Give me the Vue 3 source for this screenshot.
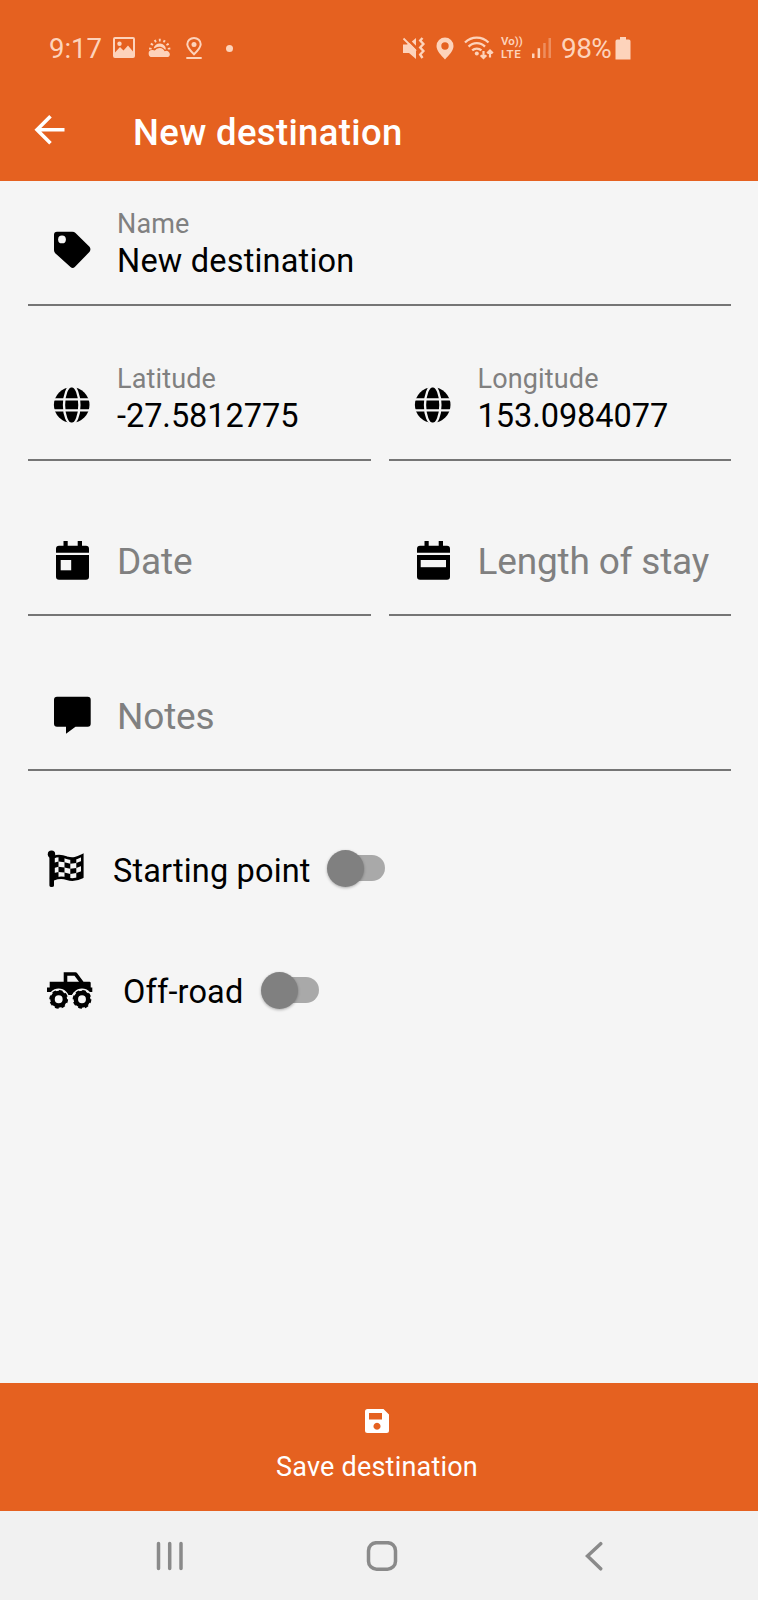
<script setup>
import { ref } from 'vue'

const rows = ref([
  [{ icon: 'tag', label: 'Name', value: 'New destination' }],
  [
    { icon: 'globe', label: 'Latitude', value: '-27.5812775' },
    { icon: 'globe', label: 'Longitude', value: '153.0984077' }
  ],
  [
    { icon: 'date', label: 'Date', value: '' },
    { icon: 'stay', label: 'Length of stay', value: '' }
  ],
  [{ icon: 'notes', label: 'Notes', value: '' }]
])

const startingPoint = ref(false)
const offRoad = ref(false)
</script>

<template>
  <div class="screen">
    <header class="header">
      <div class="status">
        <span class="time">9:17</span>
        <svg class="s-image" width="24" height="22" viewBox="0 0 24 22">
          <path fill-rule="evenodd" d="M3 0H21Q23 0 23 2V19Q23 21 21 21H3Q1 21 1 19V2Q1 0 3 0ZM3 2V15.5L8 10L11.5 13.5L16 8.5L21 14.5V2Z" />
          <circle cx="7.5" cy="6.7" r="2.2" />
        </svg>
        <svg class="s-weather" width="24" height="22" viewBox="0 0 24 22">
          <path d="M4.300 20a3.500 3.500 0 0 1-.3-7 3.500 3.500 0 0 1 2.800.6 5.500 5.500 0 0 1 9.800.7 3 3 0 0 1 3.500 5.700Z" />
          <path d="M5.600 11.600a6.200 6.200 0 0 1 12.300.8l-1 .2a7 7 0 0 0-9.600-1.700Z" />
          <path class="line" stroke-width="2.600" stroke-dasharray="1.900 2.700" d="M2.300 12.500a9.400 9.400 0 0 1 18.800 0" />
        </svg>
        <svg class="s-place" width="18" height="23" viewBox="0 0 18 23">
          <path class="line" stroke-width="2" d="M9 17.300C4.500 13 2.300 10 2.300 7.300a6.700 6.300 0 0 1 13.400 0C15.700 10 13.500 13 9 17.300Z" />
          <circle cx="9" cy="7.500" r="2.500" />
          <path d="M1.300 20h15.400v2H1.300z" />
        </svg>
        <span class="dot"></span>
        <svg class="s-mute" width="24" height="24" viewBox="0 0 24 24">
          <path d="M1 8.500H5L7.500 7 14 13.500V23L7 17H1Z" />
          <path d="M9.800 5.600 14 2V9.800Z" />
          <path class="line" stroke-width="1.800" d="M1.500 2.500 14 15" />
          <path class="line" stroke-width="2.400" d="M20.500 2l-2.300 2.500 3.200 3.500-3.200 3.500 3.200 3.500-3.200 3.500 2.300 3.500" />
        </svg>
        <svg class="s-pin" width="18" height="24" viewBox="0 0 18 24">
          <path fill-rule="evenodd" d="M9 1.500a8.500 8.500 0 0 1 8.500 8.500C17.500 15 13 19 9 23.500 5 19 .5 15 .5 10A8.500 8.500 0 0 1 9 1.500Zm0 4.800a3.700 3.700 0 1 0 0 7.400 3.700 3.700 0 0 0 0-7.400Z" />
        </svg>
        <svg class="s-wifi" width="30" height="24" viewBox="0 0 30 24">
          <path class="line" stroke-width="2.300" d="M1 6.500a16.500 16.500 0 0 1 23.500 0M4.600 10.600a11.300 11.300 0 0 1 16.400 0M8.200 14.400a6.700 6.700 0 0 1 9.200 0" />
          <circle cx="12.800" cy="17.600" r="2" />
          <path class="line" stroke-width="2.200" d="M19.500 15v7M16.700 19.200l2.800 2.800 2.800-2.800M26 21.500v-7M23.200 17.300l2.800-2.800 2.800 2.800" />
        </svg>
        <span class="volte"><b class="vo">Vo))</b><b class="lte">LTE</b></span>
        <svg class="s-signal" width="20" height="22" viewBox="0 0 20 22">
          <path d="M0 16.500h2.500V21H0zM5.600 11.300h2.500V21H5.600z" />
          <path opacity=".4" d="M11.200 6h2.500v15h-2.500zM16.500 1H19v20h-2.500z" />
        </svg>
        <span class="percent">98%</span>
        <svg class="s-battery" width="16" height="24" viewBox="0 0 16 24">
          <path d="M5 1h6v2.500h2.800q1.700 0 1.700 1.700V23.500H.5V5.200q0-1.700 1.700-1.700H5z" />
        </svg>
      </div>
      <div class="appbar">
        <svg class="back" width="32" height="32" viewBox="0 0 32 32">
          <path d="M16.500 2.300 3 15.800 16.500 29.200M3.500 15.800H30.500" />
        </svg>
        <h1>New destination</h1>
      </div>
    </header>

    <main class="form">
      <div v-for="(row, i) in rows" :key="i" class="row">
        <div v-for="field in row" :key="field.label" class="field">
          <svg class="icon" width="44" height="44" viewBox="0 0 44 44">
            <template v-if="field.icon === 'tag'">
              <path d="M7 3.700H22.300Q24.200 3.700 25.500 5L39.500 18.700Q41.300 21.200 39.600 23.800L24.800 39Q22.700 41 20.500 39L5.200 25.200Q4 24 4 22.300V6.700Q4 3.700 7 3.700Z" />
              <circle class="cut" cx="12" cy="11.400" r="3.900" />
            </template>
            <template v-else-if="field.icon === 'globe'">
              <circle cx="21.700" cy="22" r="17.800" />
              <path class="cut-line" d="M3 16.300H41M3 27.300H41" />
              <ellipse class="cut-line" cx="21.700" cy="22" rx="7.700" ry="19" />
            </template>
            <template v-else-if="field.icon === 'notes'">
              <path d="M7 3.700H37.700Q40.700 3.700 40.700 6.700V30.700Q40.700 33.700 37.700 33.700H25.500L16 40.700V33.700H7Q4 33.700 4 30.700V6.700Q4 3.700 7 3.700Z" />
            </template>
            <template v-else>
              <path d="M13.500 3h4.200v4.700h10V3H32v4.700h4q3 0 3 3v4H6v-4q0-3 3-3h4.500zM6 17H39V38.700q0 3-3 3H9q-3 0-3-3z" />
              <path v-if="field.icon === 'date'" class="cut" d="M10.700 22h10.500v10.300H10.700z" />
              <path v-else class="cut" d="M9.700 22h25.300v7.200H9.700z" />
            </template>
          </svg>
          <div v-if="field.value" class="filled">
            <label>{{ field.label }}</label>
            <span class="value" :class="{ number: !isNaN(field.value) }">{{ field.value }}</span>
          </div>
          <span v-else class="placeholder">{{ field.label }}</span>
        </div>
      </div>

      <div class="toggles">
        <div class="toggle" @click="startingPoint = !startingPoint">
          <svg class="flag" width="40" height="40" viewBox="0 0 40 40">
            <circle cx="5.500" cy="5.300" r="3.700" />
            <path d="M3.400 5h4.600v31.500q0 1.500-2.300 1.500t-2.300-1.500z" />
            <path class="outline" d="M7.500 8.300C12 6 16 6.800 21 8.700 27 10.700 31 9 36.300 6.300V28C31 30.700 27 31.700 21 29.700 16 28 12 28.500 7.500 30.300Z" />
            <path d="M12.500 7.300l6 .7v5.200l-6-.8zM24.300 9.500l6-.6v5l-6 .8zM8 13.700l4.500-1.300v5.300L8 19zM18.500 13.200l5.800 1.500v5l-5.800-1.300zM30.300 13.900l5.700-2.200v5l-5.700 2.200zM12.500 17.700l6 .7v5l-6-.5zM24.300 19.700l6-.8v5.200l-6 .8zM8 24l4.500-1.100v5.300L8 29.500zM18.500 23.400l5.800 1.500v5.300l-5.800-1.400zM30.300 24.100l5.700-2.200v6l-5.700 2z" />
          </svg>
          <span class="caption start">Starting point</span>
          <span class="switch" :class="{ on: startingPoint }"><i></i></span>
        </div>
        <div class="toggle" @click="offRoad = !offRoad">
          <svg width="48" height="40" viewBox="0 0 48 40">
            <path fill-rule="evenodd" d="M17.700 11.700V2.300H29.500Q30.500 2.300 31.200 3.200L37.500 11.700H43.500Q44.700 11.700 44.700 13V17.500H46.300V22H28L26 25H22L20 22H1V17.500H3.700V11.700ZM21.300 5.700V11.700H33L28.500 5.700Z" />
            <g v-for="cx in [12.7, 36]" :key="cx">
              <circle class="cut" :cx="cx" cy="29.300" r="10.700" />
              <circle class="tyre" :cx="cx" cy="29.300" r="6.200" />
              <circle class="tread" :cx="cx" cy="29.300" r="8.500" />
            </g>
          </svg>
          <span class="caption off">Off-road</span>
          <span class="switch low" :class="{ on: offRoad }"><i></i></span>
        </div>
      </div>
    </main>

    <button class="save">
      <svg width="24" height="24" viewBox="0 0 24 24">
        <path fill-rule="evenodd" d="M2.500 0H18.500L24 5.500V21.500Q24 24 21.500 24H2.500Q0 24 0 21.500V2.500Q0 0 2.500 0ZM4 4V10.500H17V4ZM12 13.700a3.500 3.500 0 1 0 .01 0Z" />
      </svg>
      <span>Save destination</span>
    </button>

    <nav class="nav">
      <svg width="28" height="30" viewBox="0 0 28 30"><path d="M2.500 2.500v25M13.700 2.500v25M25 2.500v25" /></svg>
      <svg width="32" height="30" viewBox="0 0 32 30"><rect x="2.500" y="1.700" width="27" height="26.500" rx="8" /></svg>
      <svg width="18" height="30" viewBox="0 0 18 30"><path d="M15.700 2.700 2.500 15 15.700 27.800" /></svg>
    </nav>
  </div>
</template>

<style>
body {
  margin: 0;
}
</style>

<style scoped>
.screen {
  width: 758px;
  height: 1600px;
  display: flex;
  flex-direction: column;
  background: #f5f5f5;
  font-family: Roboto, sans-serif;
  color: #000;
  overflow: hidden;
}
svg {
  display: block;
  flex: none;
}
.header {
  height: 181px;
  background: #e56120;
  color: #fff;
}
.status {
  display: flex;
  align-items: center;
  height: 96px;
  padding-left: 49px;
  color: #fdd3bb;
  fill: #fdd3bb;
  white-space: nowrap;
}
.status .line {
  fill: none;
  stroke: #fdd3bb;
}
.time {
  width: 53px;
  font-size: 27.500px;
}
.s-image {
  margin-left: 10px;
}
.s-weather {
  margin-left: 12px;
}
.s-place {
  margin-left: 13px;
}
.dot {
  width: 7px;
  height: 7px;
  margin-left: 23px;
  border-radius: 50%;
  background: #fdd3bb;
}
.s-mute {
  margin-left: 169px;
}
.s-pin {
  margin-left: 10px;
}
.s-wifi {
  margin-left: 10px;
}
.volte {
  width: 24px;
  margin-left: 7px;
  display: flex;
  flex-direction: column;
}
.volte b {
  height: 13px;
  line-height: 13px;
  font-weight: 600;
}
.volte .vo {
  font-size: 11.500px;
}
.volte .lte {
  font-size: 11.500px;
  letter-spacing: 0.700px;
}
.s-signal {
  margin-left: 7px;
}
.percent {
  width: 51px;
  margin-left: 9px;
  font-size: 28px;
  letter-spacing: -0.600px;
}
.s-battery {
  margin-left: 3px;
}
.appbar {
  display: flex;
  align-items: center;
  height: 68px;
  padding-left: 34px;
}
.back path {
  fill: none;
  stroke: #fff;
  stroke-width: 3.600;
}
.appbar h1 {
  margin: 5px 0 0 67px;
  font-size: 36.500px;
  font-weight: 500;
  line-height: 44px;
  letter-spacing: 0.350px;
}
.form {
  flex: 1;
  display: flex;
  flex-direction: column;
  gap: 30px;
  padding: 0 27px 0 28px;
}
.row {
  display: flex;
  gap: 18px;
}
.field {
  flex: 1;
  box-sizing: border-box;
  height: 125px;
  display: flex;
  align-items: flex-start;
  padding-left: 22px;
  border-bottom: 2px solid #757575;
  white-space: nowrap;
}
.icon {
  margin: 47px 23px 0 0;
}
.cut {
  fill: #f5f5f5;
}
.cut-line {
  fill: none;
  stroke: #f5f5f5;
  stroke-width: 2.300;
}
.filled {
  display: flex;
  flex-direction: column;
  padding-top: 26px;
}
.filled label {
  font-size: 27px;
  line-height: 34px;
  letter-spacing: 0.150px;
  color: #808080;
}
.value {
  margin-top: 1px;
  font-size: 32.500px;
  line-height: 38px;
  letter-spacing: 0.200px;
}
.value.number {
  letter-spacing: -0.050px;
}
.placeholder {
  padding-top: 49px;
  font-size: 37px;
  line-height: 44px;
  letter-spacing: -0.180px;
  color: #808080;
}
.toggles {
  display: flex;
  flex-direction: column;
  gap: 81px;
  margin-top: 48px;
  padding-left: 18px;
}
.toggle {
  display: flex;
  height: 40px;
  white-space: nowrap;
}
.outline {
  fill: none;
  stroke: #000;
  stroke-width: 2.600;
}
.tyre {
  fill: none;
  stroke: #000;
  stroke-width: 4.500;
}
.tread {
  fill: none;
  stroke: #000;
  stroke-width: 1.800;
  stroke-dasharray: 3.700 2.970;
}
.caption {
  margin-top: 2px;
  font-size: 32.500px;
  line-height: 40px;
  letter-spacing: 0.150px;
}
.start {
  width: 196px;
  margin-left: 27px;
}
.off {
  width: 120px;
  margin-left: 29px;
}
.switch {
  display: flex;
  align-items: center;
  box-sizing: border-box;
  width: 46px;
  height: 26px;
  margin: 6px 0 0 30px;
  border-radius: 13px;
  background: #a9a9a9;
}
.switch.low {
  margin-top: 7px;
}
.switch i {
  width: 37px;
  height: 37px;
  flex: none;
  margin-left: -12px;
  border-radius: 50%;
  background: #808080;
  box-shadow: 0 1px 3px rgba(0, 0, 0, 0.300);
}
.switch.on i {
  margin-left: 21px;
}
.save {
  display: flex;
  flex-direction: column;
  align-items: center;
  height: 128px;
  padding: 26px 4px 0 0;
  border: 0;
  background: #e56120;
  color: #fff;
  fill: #fff;
  font-family: inherit;
  font-size: 27px;
  line-height: 34px;
  letter-spacing: 0.200px;
}
.save span {
  margin-top: 17px;
}
.nav {
  display: flex;
  height: 89px;
  box-sizing: border-box;
  padding: 30px 0 0 156px;
  background: #f1f1f1;
}
.nav svg {
  fill: none;
  stroke: #8a8a8a;
  stroke-width: 3.500;
  stroke-linecap: round;
}
.nav svg:nth-child(2) {
  margin-left: 182px;
}
.nav svg:nth-child(3) {
  margin-left: 187px;
}
</style>
